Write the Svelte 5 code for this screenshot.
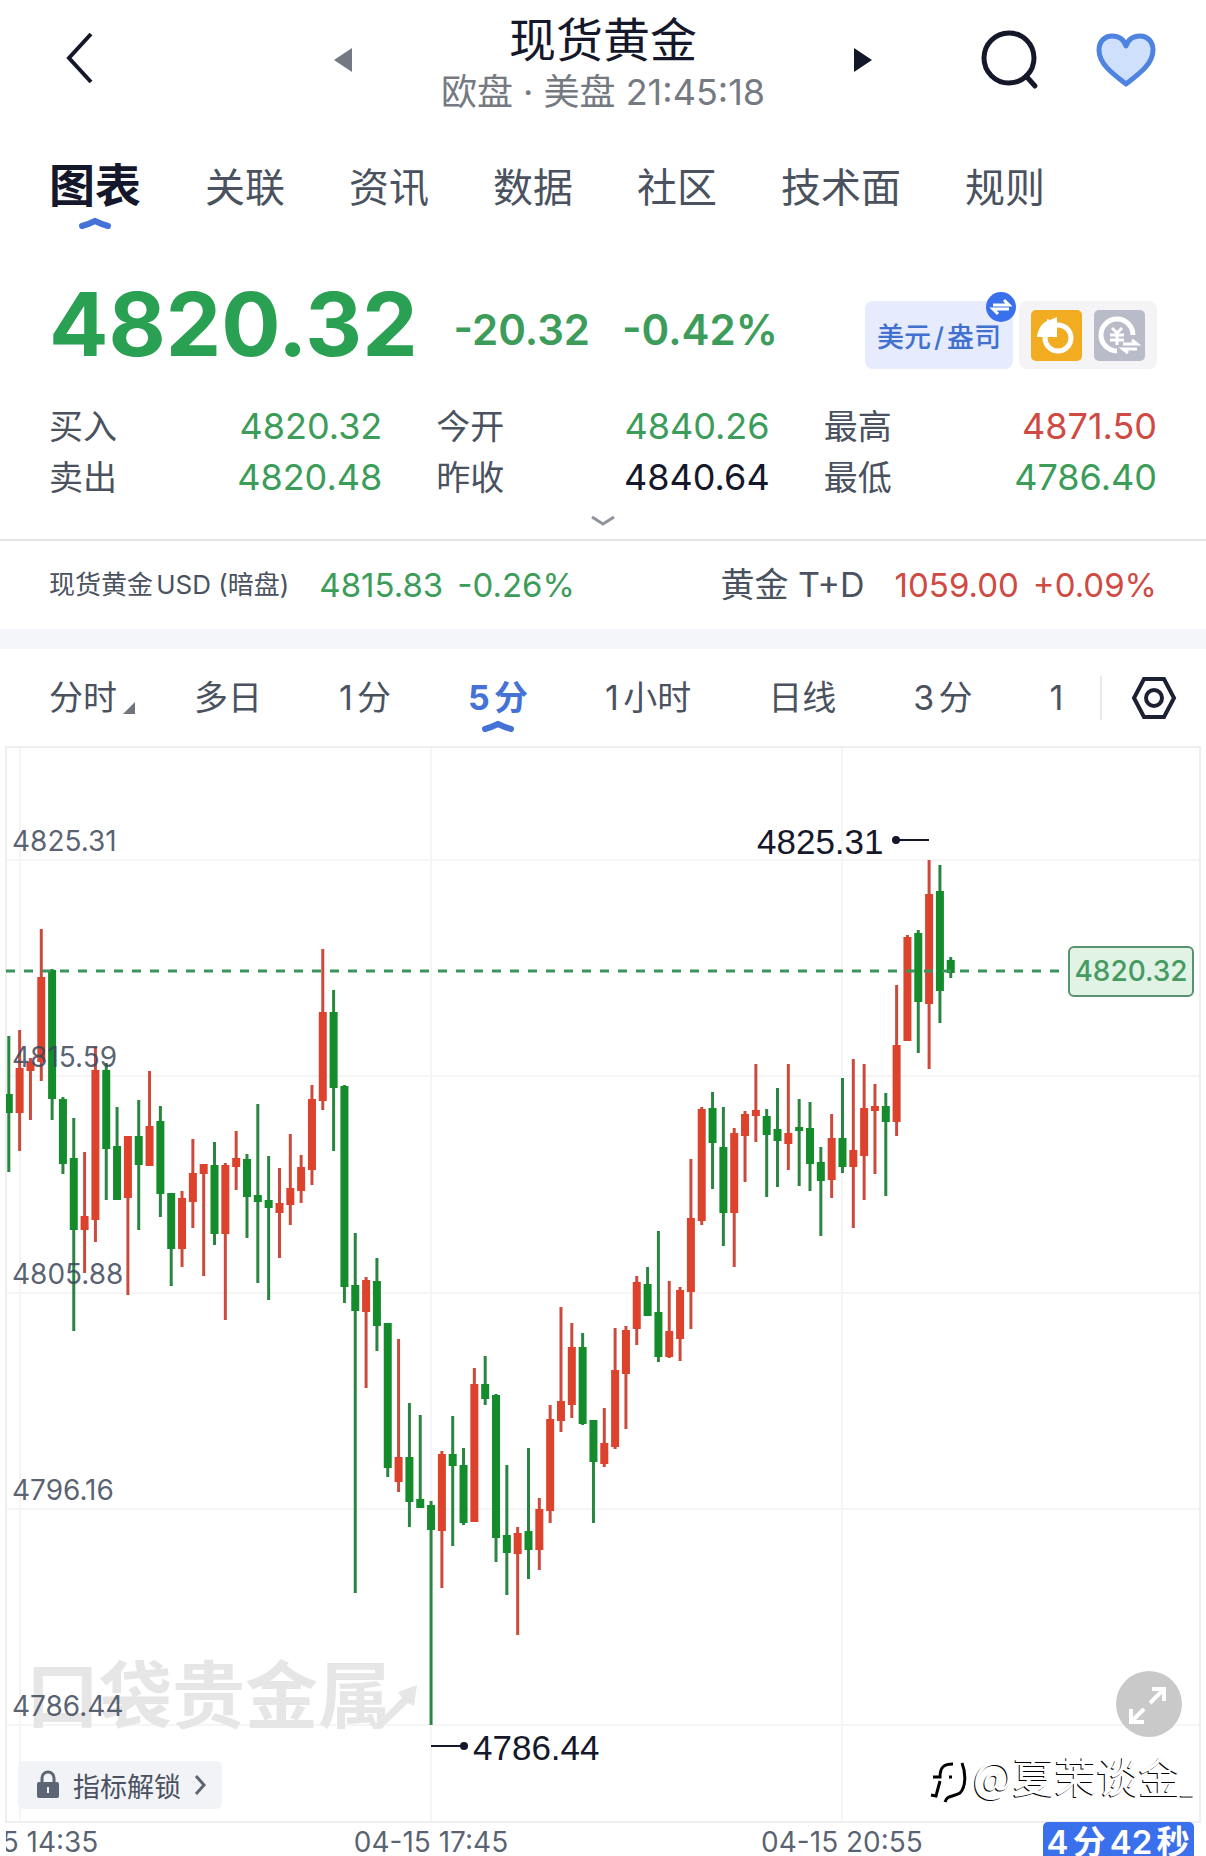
<script>
  const tabs = ['图表', '关联', '资讯', '数据', '社区', '技术面', '规则'];
  const periods = ['分时', '多日', '1分', '5分', '1小时', '日线', '3分', '1'];

  let activeTab = $state('图表');
  let activePeriod = $state('5分');

  const stats = [
    { label: '买入', value: '4820.32', tone: 'down' },
    { label: '今开', value: '4840.26', tone: 'down' },
    { label: '最高', value: '4871.50', tone: 'up' },
    { label: '卖出', value: '4820.48', tone: 'down' },
    { label: '昨收', value: '4840.64', tone: 'flat' },
    { label: '最低', value: '4786.40', tone: 'down' }
  ];

  // chart canvas
  const STEP = 10.827;
  const FIRST_X = 8.8;
  const TOP = 746;

  const priceLines = [
    { y: 860, text: '4825.31' },
    { y: 1076, text: '4815.59' },
    { y: 1293, text: '4805.88' },
    { y: 1509, text: '4796.16' },
    { y: 1725, text: '4786.44' }
  ];

  const timeLines = [
    { x: 20, text: '04-15 14:35' },
    { x: 431, text: '04-15 17:45' },
    { x: 842, text: '04-15 20:55' }
  ];

  // direction, high, low, body top, body bottom
  const candles = [
    ['d', 1036, 1172, 1094, 1113], ['u', 1030, 1151, 1068, 1113], ['u', 1058, 1120, 1062, 1071],
    ['u', 929, 1081, 977, 1062], ['d', 969, 1120, 970, 1099], ['d', 1097, 1174, 1099, 1164],
    ['d', 1118, 1331, 1158, 1230], ['u', 1152, 1273, 1216, 1230], ['u', 1047, 1242, 1070, 1220],
    ['d', 1063, 1200, 1070, 1149], ['d', 1107, 1200, 1146, 1200], ['u', 1136, 1295, 1136, 1198],
    ['d', 1100, 1230, 1136, 1165], ['u', 1071, 1166, 1126, 1166], ['d', 1106, 1217, 1121, 1194],
    ['d', 1193, 1286, 1193, 1249], ['u', 1191, 1267, 1198, 1249], ['u', 1139, 1228, 1173, 1202],
    ['u', 1164, 1276, 1164, 1174], ['d', 1142, 1245, 1165, 1234], ['u', 1163, 1320, 1165, 1234],
    ['u', 1131, 1190, 1158, 1167], ['d', 1154, 1238, 1159, 1197], ['d', 1104, 1283, 1195, 1202],
    ['d', 1156, 1300, 1200, 1208], ['u', 1168, 1258, 1203, 1213], ['u', 1134, 1225, 1188, 1205],
    ['u', 1155, 1203, 1167, 1191], ['u', 1085, 1185, 1099, 1170], ['u', 949, 1110, 1012, 1101],
    ['d', 990, 1151, 1012, 1088], ['d', 1085, 1303, 1086, 1287], ['d', 1233, 1593, 1285, 1311],
    ['u', 1277, 1388, 1280, 1312], ['d', 1258, 1351, 1281, 1326], ['d', 1323, 1477, 1323, 1468],
    ['u', 1339, 1492, 1457, 1482], ['d', 1403, 1527, 1457, 1502], ['d', 1415, 1508, 1499, 1508],
    ['d', 1501, 1725, 1505, 1530], ['u', 1451, 1588, 1454, 1531], ['d', 1416, 1546, 1454, 1466],
    ['d', 1448, 1525, 1465, 1523], ['u', 1368, 1522, 1384, 1522], ['d', 1356, 1405, 1384, 1399],
    ['d', 1394, 1562, 1395, 1538], ['d', 1465, 1595, 1535, 1553], ['u', 1527, 1635, 1533, 1554],
    ['d', 1448, 1579, 1531, 1550], ['u', 1498, 1570, 1509, 1550], ['u', 1405, 1523, 1419, 1511],
    ['u', 1307, 1432, 1401, 1421], ['u', 1323, 1418, 1347, 1405], ['d', 1333, 1425, 1347, 1424],
    ['d', 1420, 1523, 1420, 1462], ['u', 1408, 1467, 1443, 1464], ['u', 1328, 1449, 1370, 1447],
    ['u', 1326, 1429, 1330, 1374], ['u', 1276, 1345, 1282, 1329], ['d', 1267, 1316, 1284, 1316],
    ['d', 1231, 1362, 1312, 1357], ['u', 1281, 1358, 1331, 1357], ['u', 1287, 1361, 1290, 1339],
    ['u', 1159, 1329, 1218, 1292], ['u', 1107, 1225, 1109, 1221], ['d', 1092, 1189, 1108, 1143],
    ['d', 1107, 1246, 1147, 1213], ['u', 1128, 1267, 1133, 1213], ['u', 1111, 1182, 1114, 1136],
    ['u', 1064, 1142, 1110, 1116], ['d', 1109, 1197, 1116, 1135], ['d', 1088, 1187, 1129, 1141],
    ['u', 1064, 1170, 1133, 1144], ['d', 1099, 1186, 1127, 1131], ['d', 1102, 1191, 1128, 1164],
    ['d', 1147, 1236, 1162, 1181], ['u', 1114, 1198, 1138, 1180], ['d', 1078, 1173, 1138, 1167],
    ['u', 1059, 1228, 1150, 1167], ['u', 1064, 1200, 1108, 1156], ['u', 1084, 1174, 1106, 1111],
    ['d', 1093, 1196, 1106, 1122], ['u', 985, 1136, 1045, 1122], ['u', 935, 1041, 937, 1041],
    ['d', 930, 1053, 933, 1002], ['u', 860, 1069, 894, 1004], ['d', 865, 1023, 891, 991],
    ['d', 957, 978, 960, 973]
  ];

  const candleX = (i) => FIRST_X + i * STEP;
</script>

{#snippet caret()}
  <svg class="caret" viewBox="0 0 32 12" aria-hidden="true">
    <path d="M3 9 Q10 7 16 4 Q22 7 29 9" />
  </svg>
{/snippet}

<main>
  <header>
    <button class="icon back" aria-label="返回">
      <svg width="30" height="56" viewBox="0 0 30 56"><path d="M26 4 L4 28 L26 52" /></svg>
    </button>
    <div class="switcher">
      <button class="icon prev" aria-label="上一个">
        <svg width="20" height="28" viewBox="0 0 20 28"><path d="M19 2 V26 L1 14 Z" /></svg>
      </button>
      <div class="title">
        <h1>现货黄金</h1>
        <p>欧盘 · 美盘 21:45:18</p>
      </div>
      <button class="icon next" aria-label="下一个">
        <svg width="20" height="28" viewBox="0 0 20 28"><path d="M1 2 V26 L19 14 Z" /></svg>
      </button>
    </div>
    <div class="actions">
      <button class="icon search" aria-label="搜索">
        <svg width="60" height="60" viewBox="0 0 60 60">
          <circle cx="29" cy="28" r="25" />
          <path d="M46 46 L55 56" />
        </svg>
      </button>
      <button class="icon heart" aria-label="自选">
        <svg width="60" height="56" viewBox="0 0 60 56">
          <path d="M30 52 C17 42 3 32 3 18 C3 9 9 4 16 4 C23 4 28 8 30 14 C32 8 37 4 44 4 C51 4 57 9 57 18 C57 32 43 42 30 52 Z" />
        </svg>
      </button>
    </div>
  </header>

  <nav class="tabs">
    {#each tabs as tab}
      <button class:active={tab === activeTab} onclick={() => (activeTab = tab)}>
        {tab}
        {#if tab === activeTab}{@render caret()}{/if}
      </button>
    {/each}
  </nav>

  <section class="quote">
    <div class="price">
      <div class="figures down">
        <strong>4820.32</strong>
        <span>-20.32</span>
        <span>-0.42%</span>
      </div>
      <div class="tools">
        <button class="unit">
          美元<i>/</i>盎司
          <svg class="swap" viewBox="0 0 32 32" aria-hidden="true">
            <circle cx="16" cy="16" r="15" />
            <path d="M8 14 H24 L19 9 M24 18 H8 L13 23" />
          </svg>
        </button>
        <div class="modes">
          <button class="mode gold" aria-label="黄金">
            <svg viewBox="0 0 51 51">
              <circle cx="27" cy="28" r="13" />
              <path class="solid" d="M26 7 V27 H6 C7 19 11 13 16 11 L16 9 L19 10 Z" />
            </svg>
          </button>
          <button class="mode silver" aria-label="人民币">
            <svg viewBox="0 0 51 51">
              <path class="ring" d="M39 25 A16 16 0 1 0 23 41" />
              <path class="thin" d="M18 18 L23 23 L28 18 M16 25 H30 M16 30 H30 M23 23 V35" />
              <path class="thin" d="M29 34 H43 L38 30 M43 39 H29 L34 43" />
            </svg>
          </button>
        </div>
      </div>
    </div>

    <dl class="stats">
      {#each stats as stat}
        <div>
          <dt>{stat.label}</dt>
          <dd class={stat.tone}>{stat.value}</dd>
        </div>
      {/each}
    </dl>

    <button class="icon more" aria-label="展开">
      <svg width="28" height="14" viewBox="0 0 28 14"><path d="M3 3 L14 10 L25 3" /></svg>
    </button>
  </section>

  <section class="related">
    <a href="#usd">
      <small>现货黄金USD (暗盘)</small>
      <span class="down">4815.83</span>
      <span class="down">-0.26%</span>
    </a>
    <a href="#td">
      <b>黄金 T+D</b>
      <span class="up">1059.00</span>
      <span class="up">+0.09%</span>
    </a>
  </section>

  <div class="band"></div>

  <nav class="periods">
    {#each periods as period, i}
      <button class:active={period === activePeriod} onclick={() => (activePeriod = period)}>
        {period}
        {#if i === 0}
          <svg class="corner" viewBox="0 0 12 12" aria-hidden="true"><path d="M12 0 V12 H0 Z" /></svg>
        {/if}
        {#if period === activePeriod}{@render caret()}{/if}
      </button>
    {/each}
    <button class="settings" aria-label="设置">
      <svg width="46" height="44" viewBox="0 0 46 44">
        <path d="M13 3 H33 L43 22 L33 41 H13 L3 22 Z" />
        <circle cx="23" cy="22" r="8" />
      </svg>
    </button>
  </nav>

  <section class="chart">
    <svg viewBox="0 0 1206 1110" role="img" aria-label="5分K线">
      <defs>
        <clipPath id="axis"><rect x="6" y="1822" width="1194" height="40" /></clipPath>
      </defs>
      <g transform="translate(0 {-TOP})">
        <g class="grid">
          {#each priceLines as line}
            <path d="M6 {line.y} H1200" />
          {/each}
          {#each timeLines as line}
            <path d="M{line.x} 746 V1822" />
          {/each}
          <rect class="frame" x="6" y="747" width="1194" height="1075" />
        </g>

        <text class="brand" x="26" y="1722">口袋贵金属</text>
        <path class="brand" d="M376 1724 L402 1698 L398 1692 L417 1685 L414 1706 L408 1703 L386 1724 Z" />

        {#each candles as [dir, high, low, top, bottom], i}
          <g class="candle {dir}">
            <path d="M{candleX(i)} {high} V{low}" />
            <rect
              x={Math.max(6, candleX(i) - 4)}
              y={top}
              width={i === 0 ? 6.8 : 8}
              height={bottom - top}
            />
          </g>
        {/each}

        {#each priceLines as line}
          <text class="axis" x="12" y={line.y - 9}>{line.text}</text>
        {/each}

        <path class="current" d="M6 971 H1063" />
        <rect class="tag" x="1069" y="947" width="124" height="49" rx="5" />
        <text class="tag-text" x="1131" y="981">4820.32</text>

        <g class="extreme">
          <text x="757" y="854">4825.31</text>
          <circle cx="896" cy="840" r="4" />
          <path d="M896 840 H929" />
          <text x="473" y="1760">4786.44</text>
          <circle cx="464" cy="1746" r="4" />
          <path d="M431 1746 H464" />
        </g>

        <g clip-path="url(#axis)">
          {#each timeLines as line}
            <text class="axis time" x={line.x} y="1852">{line.text}</text>
          {/each}
        </g>
        <rect class="timer" x="1043" y="1822" width="151" height="44" rx="5" />
        <text class="timer-text" x="1118" y="1854">4分42秒</text>
      </g>
    </svg>

    <button class="unlock">
      <svg width="24" height="30" viewBox="0 0 24 30" aria-hidden="true">
        <path class="shackle" d="M6 13 V8 A6 6 0 0 1 18 8 V13" />
        <path d="M3 12 H21 Q23 12 23 14 V26 Q23 28 21 28 H3 Q1 28 1 26 V14 Q1 12 3 12 Z M11 17 V23 H13 V17 Z" />
      </svg>
      指标解锁
      <svg width="12" height="22" viewBox="0 0 12 22" aria-hidden="true">
        <path class="chevron" d="M2 2 L10 11 L2 20" />
      </svg>
    </button>

    <button class="expand" aria-label="全屏">
      <svg viewBox="0 0 66 66">
        <path d="M34 32 L48 18 M36 18 H48 V30 M28 38 L15 51 M15 38 V51 H28" />
      </svg>
    </button>

    <div class="signature">
      <svg width="38" height="52" viewBox="0 0 38 52" aria-hidden="true">
        <path class="ink" d="M24 11 C15 11 11 14 11 24 H4 M11 28 L7 43 L2 42 M20 24 H23 M33 10 C37 20 37 34 31 40 C24 44 18 42 16 49" />
      </svg>
      <span>@夏茉谈金<small>_</small></span>
    </div>
  </section>
</main>

<style>
  :global(body) {
    margin: 0;
    background: #fff;
  }

  main {
    overflow: hidden;
    background: #fff;
    color: #4a5260;
    font-family: Inter, "Noto Sans CJK SC", sans-serif;
    text-autospace: normal;
  }

  button {
    padding: 0;
    border: 0;
    background: none;
    color: inherit;
    font: inherit;
    cursor: pointer;
  }

  svg {
    display: block;
    fill: none;
  }

  .down { color: #3c9c59; }
  .up { color: #cf4a42; }
  .flat { color: #15182a; }

  header {
    display: grid;
    grid-template-columns: 1fr 540px 1fr;
    padding: 12px 50px 0;
  }

  .icon {
    display: flex;
    align-items: center;
    justify-content: center;
  }

  .back {
    width: 60px;
    height: 92px;
  }

  .back svg {
    stroke: #15182a;
    stroke-width: 4;
  }

  .switcher {
    display: flex;
    justify-content: space-between;
  }

  .prev,
  .next {
    height: 96px;
  }

  .prev svg { fill: #737983; }
  .next svg { fill: #12172a; }

  .title {
    text-align: center;
  }

  h1 {
    margin: 0;
    color: #15182a;
    font-size: 47px;
    font-weight: 400;
    line-height: 56px;
  }

  .title p {
    margin: 4px 0 0;
    color: #757a82;
    font-size: 36px;
    line-height: 40px;
  }

  .actions {
    display: flex;
    justify-content: flex-end;
    gap: 56px;
    height: 96px;
  }

  .search svg {
    stroke: #15182a;
    stroke-width: 5;
    stroke-linecap: round;
  }

  .heart svg {
    fill: #cfe0fd;
    stroke: #4f83e0;
    stroke-width: 5;
    stroke-linejoin: round;
  }

  .tabs {
    display: flex;
    align-items: baseline;
    gap: 64px;
    padding: 43px 49px 0;
    font-size: 40px;
    line-height: 60px;
  }

  .tabs button,
  .periods button {
    position: relative;
    white-space: nowrap;
  }

  .tabs .active {
    color: #15182a;
    font-size: 46px;
    font-weight: 700;
  }

  .caret {
    position: absolute;
    bottom: -9px;
    left: 50%;
    width: 32px;
    height: 12px;
    margin-left: -16px;
    stroke: #4472d6;
    stroke-width: 6;
    stroke-linecap: round;
  }

  .tabs .caret {
    bottom: -14px;
  }

  .quote {
    padding: 61px 49px 0;
    border-bottom: 2px solid #e4e4e6;
  }

  .price {
    display: flex;
    align-items: flex-end;
    justify-content: space-between;
  }

  .figures {
    display: flex;
    align-items: flex-end;
    gap: 32px;
    font-size: 42px;
    font-weight: 600;
    line-height: 78px;
    white-space: nowrap;
  }

  .figures strong {
    margin-right: 4px;
    color: #2aa052;
    font-size: 88px;
    font-weight: 700;
    line-height: 90px;
  }

  .tools {
    display: flex;
    gap: 6px;
  }

  .unit {
    position: relative;
    width: 148px;
    height: 68px;
    border-radius: 8px;
    background: #e6ebfd;
    color: #4171d0;
    font-size: 27px;
    font-weight: 500;
    white-space: nowrap;
  }

  .unit i {
    margin: 0 3px;
    font-style: normal;
  }

  .swap {
    position: absolute;
    top: -10px;
    right: -4px;
    width: 32px;
    height: 32px;
    fill: #3a70ec;
  }

  .swap path {
    fill: none;
    stroke: #fff;
    stroke-width: 3;
  }

  .modes {
    display: flex;
    align-items: center;
    gap: 12px;
    padding: 0 12px;
    border-radius: 8px;
    background: #f4f4f6;
  }

  .mode {
    width: 51px;
    height: 51px;
    border-radius: 5px;
  }

  .mode svg {
    stroke: #fff;
    stroke-width: 5;
  }

  .gold { background: #f1ac22; }
  .silver { background: #b9bbc8; }

  .mode .solid {
    fill: #fff;
    stroke: none;
  }

  .mode .thin {
    stroke-width: 3;
  }

  .stats {
    display: grid;
    grid-template-columns: repeat(3, 1fr);
    column-gap: 54px;
    margin: 32px 0 0;
    font-size: 34px;
    line-height: 51px;
  }

  .stats div {
    display: flex;
    justify-content: space-between;
  }

  .stats dd {
    margin: 0;
    font-size: 36px;
  }

  .more {
    width: 100%;
    height: 36px;
  }

  .more svg {
    stroke: #8f949c;
    stroke-width: 3;
  }

  .related {
    display: flex;
    justify-content: space-between;
    padding: 0 49px;
    font-size: 33px;
    line-height: 88px;
  }

  .related a {
    display: flex;
    gap: 14px;
    color: inherit;
    text-decoration: none;
    white-space: nowrap;
  }

  .related small,
  .related b {
    margin-right: 16px;
    font-weight: 400;
  }

  .related small { font-size: 26px; }
  .related b { font-size: 34px; }

  .band {
    height: 20px;
    background: #f5f6fa;
  }

  .periods {
    display: flex;
    align-items: center;
    gap: 77px;
    height: 97px;
    padding: 0 31px 0 49px;
    font-size: 34px;
    line-height: 50px;
  }

  .periods .active {
    color: #4472d6;
    font-weight: 700;
  }

  .corner {
    position: absolute;
    right: -18px;
    bottom: 9px;
    width: 12px;
    height: 12px;
    fill: #6f757d;
  }

  .periods .settings {
    margin: 0 0 0 -40px;
    padding-left: 29px;
    border-left: 2px solid #e9e9ec;
  }

  .settings svg {
    stroke: #1b2033;
    stroke-width: 4;
  }

  .chart {
    position: relative;
  }

  .chart > svg {
    width: 100%;
    height: auto;
  }

  .grid {
    stroke: #f5f5f6;
    stroke-width: 2;
  }

  .frame {
    stroke: #efeff0;
  }

  .brand {
    fill: #e6e6e6;
    font-family: "Noto Sans CJK SC", sans-serif;
    font-size: 73px;
    font-weight: 700;
  }

  .axis {
    fill: #3c4758;
    fill-opacity: 0.85;
    font-size: 28px;
  }

  .time {
    text-anchor: middle;
  }

  .candle path {
    stroke-width: 3;
  }

  .u { fill: #dd422d; }
  .u path { stroke: #cc4a3c; }
  .d { fill: #148c2c; }
  .d path { stroke: #2a8540; }

  .current {
    stroke: #3b945a;
    stroke-width: 3;
    stroke-dasharray: 9 9;
  }

  .tag {
    fill: #e0f3e5;
    stroke: #5a9270;
    stroke-width: 2;
  }

  .tag-text {
    fill: #479a62;
    font-size: 28px;
    font-weight: 500;
    text-anchor: middle;
  }

  .extreme {
    fill: #15182a;
    font-family: "Liberation Sans", Arial, sans-serif;
    font-size: 35px;
  }

  .extreme path {
    stroke: #15182a;
    stroke-width: 2;
  }

  .timer {
    fill: #3a70ec;
  }

  .timer-text {
    fill: #fff;
    font-size: 33px;
    font-weight: 600;
    text-anchor: middle;
  }

  .unlock {
    position: absolute;
    bottom: 47px;
    left: 18px;
    display: flex;
    align-items: center;
    gap: 13px;
    height: 48px;
    padding: 0 16px 0 18px;
    border-radius: 6px;
    background: #f2f3f7;
    font-size: 27px;
  }

  .unlock svg {
    fill: #5c6573;
    fill-rule: evenodd;
  }

  .unlock .shackle,
  .unlock .chevron {
    fill: none;
    stroke: #5c6573;
    stroke-width: 3;
  }

  .expand {
    position: absolute;
    right: 24px;
    bottom: 119px;
    width: 66px;
    height: 66px;
    border-radius: 50%;
    background: #c9c9c9;
  }

  .expand svg {
    stroke: #fff;
    stroke-width: 4;
  }

  .signature {
    position: absolute;
    right: 12px;
    bottom: 45px;
    display: flex;
    align-items: center;
    gap: 6px;
    color: #fff;
    font-family: "Noto Sans CJK SC", sans-serif;
    font-size: 42px;
    line-height: 56px;
    text-shadow: -1px 1px 0 #000;
    pointer-events: none;
  }

  .signature small {
    font-size: 24px;
  }

  .ink {
    stroke: #000;
    stroke-width: 3;
  }
</style>
